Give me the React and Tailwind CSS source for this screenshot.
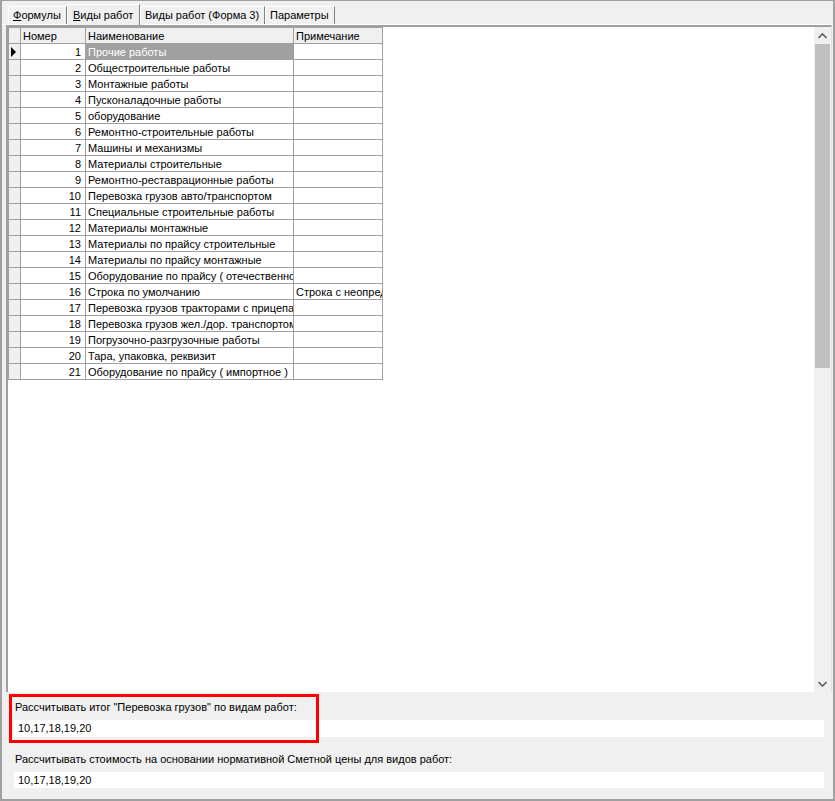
import React from 'react';

const rows = [
  [1, 'Прочие работы', ''],
  [2, 'Общестроительные работы', ''],
  [3, 'Монтажные работы', ''],
  [4, 'Пусконаладочные работы', ''],
  [5, 'оборудование', ''],
  [6, 'Ремонтно-строительные работы', ''],
  [7, 'Машины и механизмы', ''],
  [8, 'Материалы строительные', ''],
  [9, 'Ремонтно-реставрационные работы', ''],
  [10, 'Перевозка грузов авто/транспортом', ''],
  [11, 'Специальные строительные работы', ''],
  [12, 'Материалы монтажные', ''],
  [13, 'Материалы по прайсу строительные', ''],
  [14, 'Материалы по прайсу монтажные', ''],
  [15, 'Оборудование по прайсу ( отечественное )', ''],
  [16, 'Строка по умолчанию', 'Строка с неопределенным видом работ'],
  [17, 'Перевозка грузов тракторами с прицепами', ''],
  [18, 'Перевозка грузов жел./дор. транспортом', ''],
  [19, 'Погрузочно-разгрузочные работы', ''],
  [20, 'Тара, упаковка, реквизит', ''],
  [21, 'Оборудование по прайсу ( импортное )', ''],
];

function Tab({ u, rest, width, active }) {
  return (
    <div
      className={`flex items-center border-l border-t border-r border-l-white border-t-white border-r-[#808080] bg-[#f0f0f0] ${
        active ? 'h-[21px] px-[5px] -mb-[1px] z-10' : 'h-[18px] px-[4px]'
      }`}
      style={{ width }}
    >
      <span className="whitespace-nowrap">
        <span className="underline">{u}</span>
        {rest}
      </span>
    </div>
  );
}

export default function App() {
  return (
    <div
      className="w-[835px] h-[801px] bg-[#f0f0f0] text-[11px] text-black overflow-hidden flex flex-col border-l-2 border-t border-r-2 border-b-2 border-[#a0a0a0]"
      style={{ fontFamily: '"Liberation Sans", Arial, sans-serif' }}
    >
      {/* Tabs */}
      <div className="h-[23px] flex items-end pl-[6px] pt-[2px]">
        <Tab u="Ф" rest="ормулы" width={59} />
        <Tab u="В" rest="иды работ" width={73} active />
        <Tab u="" rest="Виды работ (Форма 3)" width={125} />
        <Tab u="" rest="Параметры" width={70} />
      </div>

      {/* Tab page */}
      <div className="flex-1 flex flex-col border-t border-t-white">
        {/* Grid */}
        <div className="ml-[4px] mr-[1px] h-[667px] flex border-l-2 border-t-2 border-l-[#a0a0a0] border-t-[#a0a0a0] border-r border-r-[#e3e3e3] bg-white">
          <div className="flex-1 bg-white overflow-hidden">
            <table className="table-fixed border-collapse w-[375px]">
              <colgroup>
                <col className="w-[12px]" />
                <col className="w-[65px]" />
                <col className="w-[208px]" />
                <col className="w-[89px]" />
              </colgroup>
              <thead>
                <tr className="h-[16px]">
                  <th className="bg-[#f0f0f0] border border-[#a0a0a0] p-0" />
                  <th className="bg-[#f0f0f0] border border-[#a0a0a0] font-normal text-left pl-[2px] p-0 leading-[14px]">Номер</th>
                  <th className="bg-[#f0f0f0] border border-[#a0a0a0] font-normal text-left pl-[2px] p-0 leading-[14px]">Наименование</th>
                  <th className="bg-[#f0f0f0] border border-[#a0a0a0] font-normal text-left pl-[2px] p-0 leading-[14px]">Примечание</th>
                </tr>
              </thead>
              <tbody>
                {rows.map(([n, name, note], i) => (
                  <tr key={n} className="h-[16px]">
                    <td className="bg-[#f0f0f0] border border-[#a0a0a0] p-0">
                      {i === 0 && (
                        <svg width="6" height="10" viewBox="0 0 6 10" className="ml-[2px]">
                          <path d="M0 0 L5 5 L0 10 Z" fill="#000" />
                        </svg>
                      )}
                    </td>
                    <td className="border border-[#a0a0a0] p-0 pr-[4px] text-right leading-[14px] whitespace-nowrap overflow-hidden">{n}</td>
                    <td
                      className={`border border-[#a0a0a0] p-0 pl-[2px] leading-[14px] whitespace-nowrap overflow-hidden ${
                        i === 0 ? 'bg-[#a0a0a0] text-white' : ''
                      }`}
                    >
                      {name}
                    </td>
                    <td className="border border-[#a0a0a0] p-0 pl-[2px] leading-[14px] whitespace-nowrap overflow-hidden">{note}</td>
                  </tr>
                ))}
              </tbody>
            </table>
          </div>
          {/* Scrollbar */}
          <div className="w-[17px] bg-[#f0f0f0] flex flex-col">
            <div className="h-[17px] flex items-center justify-center">
              <svg width="9" height="6" viewBox="0 0 9 6">
                <path d="M0.5 5 L4.5 1 L8.5 5" stroke="#606060" strokeWidth="1.6" fill="none" />
              </svg>
            </div>
            <div className="h-[324px] bg-[#c0c0c0] mx-[1px]" />
            <div className="flex-1" />
            <div className="h-[17px] flex items-center justify-center">
              <svg width="9" height="6" viewBox="0 0 9 6">
                <path d="M0.5 1 L4.5 5 L8.5 1" stroke="#606060" strokeWidth="1.6" fill="none" />
              </svg>
            </div>
          </div>
        </div>

        {/* Bottom panel */}
        <div className="relative flex-1 pl-[12px] pr-[9px]">
          <div className="absolute left-[7px] top-[2px] w-[310px] h-[49px] border-[3px] border-[#ff0000] pointer-events-none" />
          <div className="pt-[8px] leading-[14px] pl-[1px]">Рассчитывать итог "Перевозка грузов" по видам работ:</div>
          <div className="mt-[6px] h-[17px] bg-white leading-[17px] pl-[4px]">10,17,18,19,20</div>
          <div className="mt-[15px] leading-[14px] pl-[1px]">Рассчитывать стоимость на основании нормативной Сметной цены для видов работ:</div>
          <div className="mt-[6px] h-[16px] bg-white leading-[16px] pl-[4px]">10,17,18,19,20</div>
        </div>
      </div>
    </div>
  );
}
